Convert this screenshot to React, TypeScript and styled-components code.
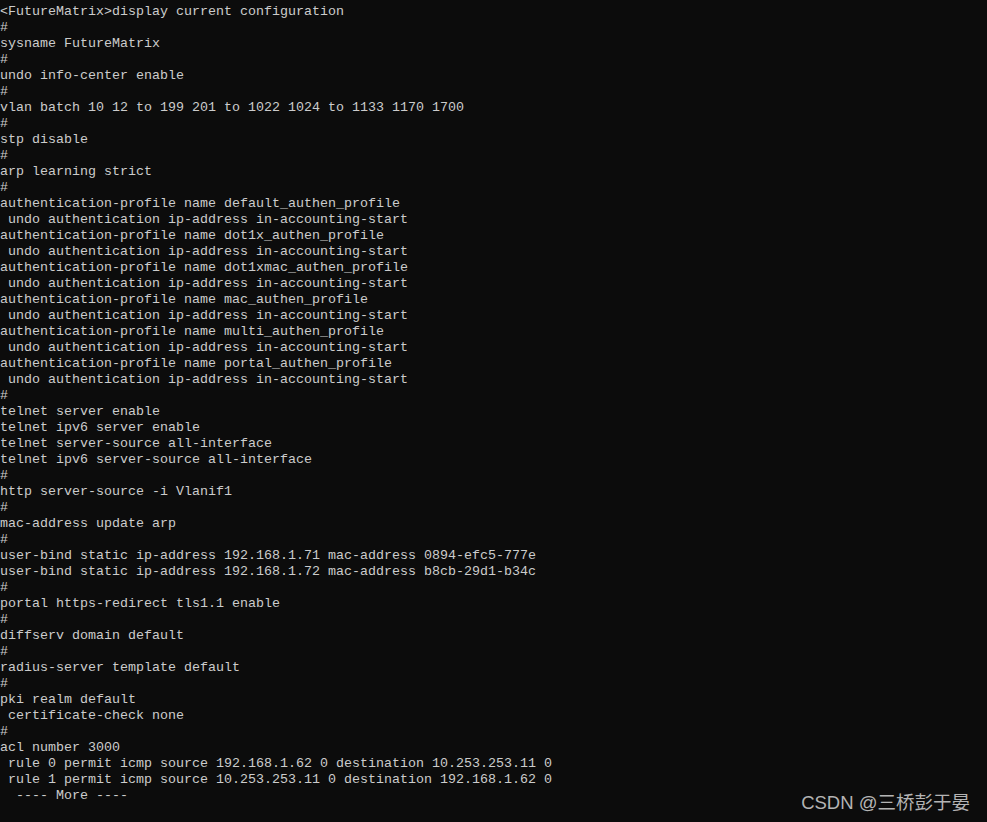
import React from "react";
import styled, { createGlobalStyle } from "styled-components";

const Global = createGlobalStyle`
  html, body { margin: 0; padding: 0; background: #0c0c0c; }
  body { width: 987px; height: 822px; overflow: hidden; }
`;

const Screen = styled.div`
  position: relative;
  width: 987px;
  height: 822px;
  background: #0c0c0c;
  padding-top: 4px;
  box-sizing: border-box;
  display: flex;
  flex-direction: column;
`;

const Line = styled.div`
  font-family: "Liberation Mono", "DejaVu Sans Mono", monospace;
  font-size: 13.33px;
  line-height: 16px;
  height: 16px;
  color: #cccccc;
  white-space: pre;
`;

const Watermark = styled.div`
  position: absolute;
  right: 17px;
  bottom: 8px;
  font-family: "Liberation Sans", "Noto Sans CJK SC", sans-serif;
  font-size: 18.5px;
  color: #b4b4b4;
  white-space: nowrap;
`;

const lines = [
  "<FutureMatrix>display current configuration",
  "#",
  "sysname FutureMatrix",
  "#",
  "undo info-center enable",
  "#",
  "vlan batch 10 12 to 199 201 to 1022 1024 to 1133 1170 1700",
  "#",
  "stp disable",
  "#",
  "arp learning strict",
  "#",
  "authentication-profile name default_authen_profile",
  " undo authentication ip-address in-accounting-start",
  "authentication-profile name dot1x_authen_profile",
  " undo authentication ip-address in-accounting-start",
  "authentication-profile name dot1xmac_authen_profile",
  " undo authentication ip-address in-accounting-start",
  "authentication-profile name mac_authen_profile",
  " undo authentication ip-address in-accounting-start",
  "authentication-profile name multi_authen_profile",
  " undo authentication ip-address in-accounting-start",
  "authentication-profile name portal_authen_profile",
  " undo authentication ip-address in-accounting-start",
  "#",
  "telnet server enable",
  "telnet ipv6 server enable",
  "telnet server-source all-interface",
  "telnet ipv6 server-source all-interface",
  "#",
  "http server-source -i Vlanif1",
  "#",
  "mac-address update arp",
  "#",
  "user-bind static ip-address 192.168.1.71 mac-address 0894-efc5-777e",
  "user-bind static ip-address 192.168.1.72 mac-address b8cb-29d1-b34c",
  "#",
  "portal https-redirect tls1.1 enable",
  "#",
  "diffserv domain default",
  "#",
  "radius-server template default",
  "#",
  "pki realm default",
  " certificate-check none",
  "#",
  "acl number 3000",
  " rule 0 permit icmp source 192.168.1.62 0 destination 10.253.253.11 0",
  " rule 1 permit icmp source 10.253.253.11 0 destination 192.168.1.62 0",
  "  ---- More ----",
];

export default function App() {
  return (
    <>
      <Global />
      <Screen>
        {lines.map((l, i) => (
          <Line key={i}>{l}</Line>
        ))}
        <Watermark>CSDN @三桥彭于晏</Watermark>
      </Screen>
    </>
  );
}
